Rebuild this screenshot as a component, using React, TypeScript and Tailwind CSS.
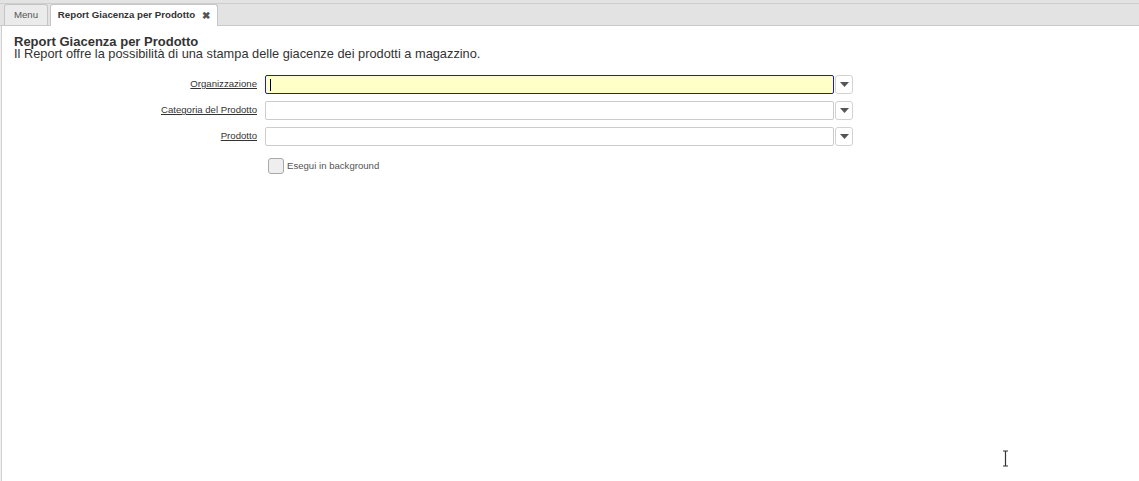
import React from 'react';

const fields = ['Organizzazione', 'Categoria del Prodotto', 'Prodotto'];

const Caret = () => (
  <svg width="9" height="5" viewBox="0 0 9 5">
    <path d="M0 0 L9 0 L4.5 5 Z" fill="#555" />
  </svg>
);

const App = () => {
  return (
    <div className="relative h-[481px] w-[1139px] overflow-hidden bg-white text-[#333]" style={{ fontFamily: '"Liberation Sans", Arial, sans-serif' }}>
      {/* barra delle schede */}
      <div className="h-[26px] border-b border-[#c9c9c9] bg-[#e3e3e3] pt-[3px]">
        <div className="flex h-[22px] items-end gap-[2px] border-t border-[#cdcdcd] pl-[4px]">
          <div className="flex h-[21px] w-[44px] items-center justify-center rounded-t-[3px] border border-b-0 border-[#c5c5c5] bg-[#ebebeb] text-[9.7px] text-[#555]">
            Menu
          </div>
          <div className="-mb-px flex h-[22px] w-[168px] items-center justify-center gap-[7px] rounded-t-[3px] border border-b-0 border-[#c5c5c5] bg-white text-[9.7px] font-bold text-[#333]">
            <span>Report Giacenza per Prodotto</span>
            <span className="text-[10px] text-[#555]">✖</span>
          </div>
        </div>
      </div>

      <div className="flex h-[455px]">
        <div className="w-[2px] border-r border-[#cfcfcf] bg-[#f1f1f1]" />
        <div className="flex-1">
          <div className="pl-[12px] pt-[10px]">
            <div className="text-[13px] font-bold leading-[12px]">Report Giacenza per Prodotto</div>
            <div className="text-[12.8px] leading-[12px]">
              Il Report offre la possibilità di una stampa delle giacenze dei prodotti a magazzino.
            </div>
          </div>

          <div className="mt-[15px] grid grid-cols-[255px_588px] gap-x-[8px] gap-y-[7px]">
            {fields.map((f, i) => (
              <React.Fragment key={f}>
                <div className="flex items-center justify-end text-[9.6px] text-[#333] underline">{f}</div>
                <div className="flex h-[19px]">
                  <div
                    className={
                      i === 0
                        ? 'flex flex-1 items-center rounded-[2px] border border-[#1a1acc] bg-[#ffffc8] pl-[4px]'
                        : 'flex-1 rounded-[2px] border border-[#cccccc] bg-white'
                    }
                  >
                    {i === 0 && <div className="h-[12px] w-px bg-black" />}
                  </div>
                  <div className="ml-px flex w-[18px] items-center justify-center rounded-[3px] border border-[#d2d2d2] bg-white">
                    <Caret />
                  </div>
                </div>
              </React.Fragment>
            ))}
            <div />
            <div className="mt-[5px] flex items-center pl-[3px]">
              <div className="h-[16px] w-[16px] rounded-[3px] border border-[#a9a9a9] bg-[#eeeeee]" />
              <span className="ml-[3px] text-[9.6px] text-[#555]">Esegui in background</span>
            </div>
          </div>
        </div>
      </div>

      {/* cursore del mouse */}
      <svg className="absolute left-[1001px] top-[450px]" width="9" height="17" viewBox="0 0 9 17">
        <path d="M2 1 H7 M4.5 1 V16 M2 16 H7" stroke="#fff" strokeWidth="3" fill="none" />
        <path d="M2 1 H7 M4.5 1 V16 M2 16 H7" stroke="#333" strokeWidth="1.2" fill="none" />
      </svg>
    </div>
  );
};

export default App;
